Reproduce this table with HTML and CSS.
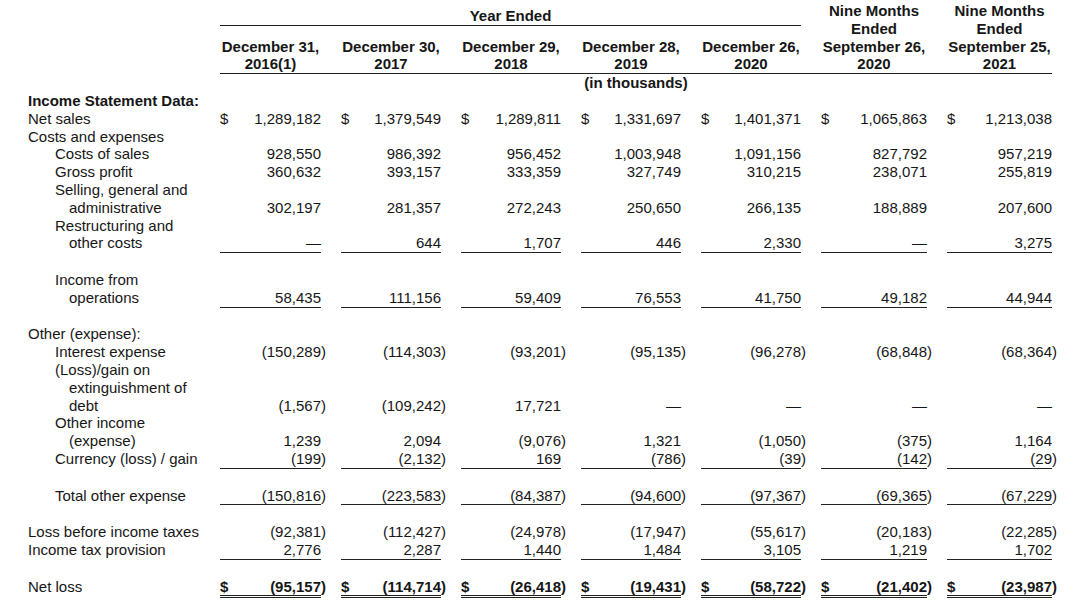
FILE: index.html
```html
<!DOCTYPE html>
<html lang="en">
<head>
<meta charset="utf-8">
<title>Income Statement Data</title>
<link rel="stylesheet" href="styles.css">
</head>
<body>
<div class="stmt">
  <div class="head">
    <div class="head-cols">
      <div class="period">Year Ended</div>
      <div class="hcell c1">December 31,<br>2016(1)</div>
      <div class="hcell c2">December 30,<br>2017</div>
      <div class="hcell c3">December 29,<br>2018</div>
      <div class="hcell c4">December 28,<br>2019</div>
      <div class="hcell c5">December 26,<br>2020</div>
      <div class="hcell nine c6">Nine Months<br>Ended<br>September 26,<br>2020</div>
      <div class="hcell nine c7">Nine Months<br>Ended<br>September 25,<br>2021</div>
    </div>
  </div>
  <div class="units">(in thousands)</div>

  <div class="row"><div class="label b">Income Statement Data:</div></div>

  <div class="row">
    <div class="label">Net sales</div>
    <div class="val"><span>$</span><span class="n">1,289,182</span></div>
    <div class="val"><span>$</span><span class="n">1,379,549</span></div>
    <div class="val"><span>$</span><span class="n">1,289,811</span></div>
    <div class="val"><span>$</span><span class="n">1,331,697</span></div>
    <div class="val"><span>$</span><span class="n">1,401,371</span></div>
    <div class="val"><span>$</span><span class="n">1,065,863</span></div>
    <div class="val"><span>$</span><span class="n">1,213,038</span></div>
  </div>

  <div class="row"><div class="label">Costs and expenses</div></div>

  <div class="row">
    <div class="label ind">Costs of sales</div>
    <div class="val"><span class="n">928,550</span></div>
    <div class="val"><span class="n">986,392</span></div>
    <div class="val"><span class="n">956,452</span></div>
    <div class="val"><span class="n">1,003,948</span></div>
    <div class="val"><span class="n">1,091,156</span></div>
    <div class="val"><span class="n">827,792</span></div>
    <div class="val"><span class="n">957,219</span></div>
  </div>

  <div class="row">
    <div class="label ind">Gross profit</div>
    <div class="val"><span class="n">360,632</span></div>
    <div class="val"><span class="n">393,157</span></div>
    <div class="val"><span class="n">333,359</span></div>
    <div class="val"><span class="n">327,749</span></div>
    <div class="val"><span class="n">310,215</span></div>
    <div class="val"><span class="n">238,071</span></div>
    <div class="val"><span class="n">255,819</span></div>
  </div>

  <div class="row">
    <div class="label ind">Selling, general and<span class="cont">administrative</span></div>
    <div class="val"><span class="n">302,197</span></div>
    <div class="val"><span class="n">281,357</span></div>
    <div class="val"><span class="n">272,243</span></div>
    <div class="val"><span class="n">250,650</span></div>
    <div class="val"><span class="n">266,135</span></div>
    <div class="val"><span class="n">188,889</span></div>
    <div class="val"><span class="n">207,600</span></div>
  </div>

  <div class="row ul">
    <div class="label ind">Restructuring and<span class="cont">other costs</span></div>
    <div class="val"><span class="n">—</span></div>
    <div class="val"><span class="n">644</span></div>
    <div class="val"><span class="n">1,707</span></div>
    <div class="val"><span class="n">446</span></div>
    <div class="val"><span class="n">2,330</span></div>
    <div class="val"><span class="n">—</span></div>
    <div class="val"><span class="n">3,275</span></div>
  </div>

  <div class="gap"></div>

  <div class="row ul">
    <div class="label ind">Income from<span class="cont">operations</span></div>
    <div class="val"><span class="n">58,435</span></div>
    <div class="val"><span class="n">111,156</span></div>
    <div class="val"><span class="n">59,409</span></div>
    <div class="val"><span class="n">76,553</span></div>
    <div class="val"><span class="n">41,750</span></div>
    <div class="val"><span class="n">49,182</span></div>
    <div class="val"><span class="n">44,944</span></div>
  </div>

  <div class="gap"></div>

  <div class="row"><div class="label">Other (expense):</div></div>

  <div class="row">
    <div class="label ind">Interest expense</div>
    <div class="val"><span class="n neg">(150,289)</span></div>
    <div class="val"><span class="n neg">(114,303)</span></div>
    <div class="val"><span class="n neg">(93,201)</span></div>
    <div class="val"><span class="n neg">(95,135)</span></div>
    <div class="val"><span class="n neg">(96,278)</span></div>
    <div class="val"><span class="n neg">(68,848)</span></div>
    <div class="val"><span class="n neg">(68,364)</span></div>
  </div>

  <div class="row">
    <div class="label ind">(Loss)/gain on<span class="cont">extinguishment of</span><span class="cont">debt</span></div>
    <div class="val"><span class="n neg">(1,567)</span></div>
    <div class="val"><span class="n neg">(109,242)</span></div>
    <div class="val"><span class="n">17,721</span></div>
    <div class="val"><span class="n">—</span></div>
    <div class="val"><span class="n">—</span></div>
    <div class="val"><span class="n">—</span></div>
    <div class="val"><span class="n">—</span></div>
  </div>

  <div class="row">
    <div class="label ind">Other income<span class="cont">(expense)</span></div>
    <div class="val"><span class="n">1,239</span></div>
    <div class="val"><span class="n">2,094</span></div>
    <div class="val"><span class="n neg">(9,076)</span></div>
    <div class="val"><span class="n">1,321</span></div>
    <div class="val"><span class="n neg">(1,050)</span></div>
    <div class="val"><span class="n neg">(375)</span></div>
    <div class="val"><span class="n">1,164</span></div>
  </div>

  <div class="row ul">
    <div class="label ind">Currency (loss) / gain</div>
    <div class="val"><span class="n neg">(199)</span></div>
    <div class="val"><span class="n neg">(2,132)</span></div>
    <div class="val"><span class="n">169</span></div>
    <div class="val"><span class="n neg">(786)</span></div>
    <div class="val"><span class="n neg">(39)</span></div>
    <div class="val"><span class="n neg">(142)</span></div>
    <div class="val"><span class="n neg">(29)</span></div>
  </div>

  <div class="gap"></div>

  <div class="row ul">
    <div class="label ind">Total other expense</div>
    <div class="val"><span class="n neg">(150,816)</span></div>
    <div class="val"><span class="n neg">(223,583)</span></div>
    <div class="val"><span class="n neg">(84,387)</span></div>
    <div class="val"><span class="n neg">(94,600)</span></div>
    <div class="val"><span class="n neg">(97,367)</span></div>
    <div class="val"><span class="n neg">(69,365)</span></div>
    <div class="val"><span class="n neg">(67,229)</span></div>
  </div>

  <div class="gap"></div>

  <div class="row">
    <div class="label">Loss before income taxes</div>
    <div class="val"><span class="n neg">(92,381)</span></div>
    <div class="val"><span class="n neg">(112,427)</span></div>
    <div class="val"><span class="n neg">(24,978)</span></div>
    <div class="val"><span class="n neg">(17,947)</span></div>
    <div class="val"><span class="n neg">(55,617)</span></div>
    <div class="val"><span class="n neg">(20,183)</span></div>
    <div class="val"><span class="n neg">(22,285)</span></div>
  </div>

  <div class="row ul">
    <div class="label">Income tax provision</div>
    <div class="val"><span class="n">2,776</span></div>
    <div class="val"><span class="n">2,287</span></div>
    <div class="val"><span class="n">1,440</span></div>
    <div class="val"><span class="n">1,484</span></div>
    <div class="val"><span class="n">3,105</span></div>
    <div class="val"><span class="n">1,219</span></div>
    <div class="val"><span class="n">1,702</span></div>
  </div>

  <div class="gap"></div>

  <div class="row dbl">
    <div class="label">Net loss</div>
    <div class="val"><span>$</span><span class="n neg">(95,157)</span></div>
    <div class="val"><span>$</span><span class="n neg">(114,714)</span></div>
    <div class="val"><span>$</span><span class="n neg">(26,418)</span></div>
    <div class="val"><span>$</span><span class="n neg">(19,431)</span></div>
    <div class="val"><span>$</span><span class="n neg">(58,722)</span></div>
    <div class="val"><span>$</span><span class="n neg">(21,402)</span></div>
    <div class="val"><span>$</span><span class="n neg">(23,987)</span></div>
  </div>
</div>
</body>
</html>
```

FILE: styles.css
```css
html, body {
  margin: 0;
  padding: 0;
  background: #ffffff;
}

body {
  color: #161616;
  font-family: "Liberation Sans", Arial, sans-serif;
  font-size: 15px;
  line-height: 17.8px;
}

.stmt {
  width: 1080px;
  padding-top: 2px;
}

/* ---------- header ---------- */
.head {
  padding-left: 220px;
}

.head-cols {
  width: 832px;
  display: grid;
  grid-template-columns: 101px 100px 100px 100px 100px 106px 105px;
  grid-template-rows: 23.8px auto;
  column-gap: 20px;
  border-bottom: 1px solid #222;
  font-weight: bold;
  text-align: center;
}

.period {
  grid-column: 1 / 6;
  grid-row: 1;
  padding-top: 5px;
  border-bottom: 1px solid #222;
}

.hcell {
  grid-row: 2;
  align-self: end;
  white-space: nowrap;
}

.hcell.nine {
  grid-row: 1 / 3;
}

.c1 { grid-column: 1; }
.c2 { grid-column: 2; }
.c3 { grid-column: 3; }
.c4 { grid-column: 4; }
.c5 { grid-column: 5; }
.c6 { grid-column: 6; }
.c7 { grid-column: 7; }

.units {
  margin-left: 220px;
  width: 832px;
  text-align: center;
  font-weight: bold;
}

/* ---------- body rows ---------- */
.row {
  display: grid;
  grid-template-columns: 200px 101px 100px 100px 100px 100px 106px 105px;
  column-gap: 20px;
  align-items: end;
}

.label {
  padding-left: 28px;
  white-space: nowrap;
}

.label.b {
  font-weight: bold;
}

.label.ind {
  padding-left: 55px;
}

.cont {
  display: block;
  padding-left: 14px;
}

.val {
  display: flex;
  white-space: nowrap;
}

.val .n {
  margin-left: auto;
}

.val .neg {
  margin-right: -5px;
}

.row.ul .val {
  border-bottom: 1px solid #222;
}

.row.ul .label {
  border-bottom: 1px solid transparent;
}

.row.dbl .val {
  border-bottom: 3px double #222;
  font-weight: bold;
}

.row.dbl .label {
  border-bottom: 3px solid transparent;
}

.gap {
  height: 17.8px;
}
```
